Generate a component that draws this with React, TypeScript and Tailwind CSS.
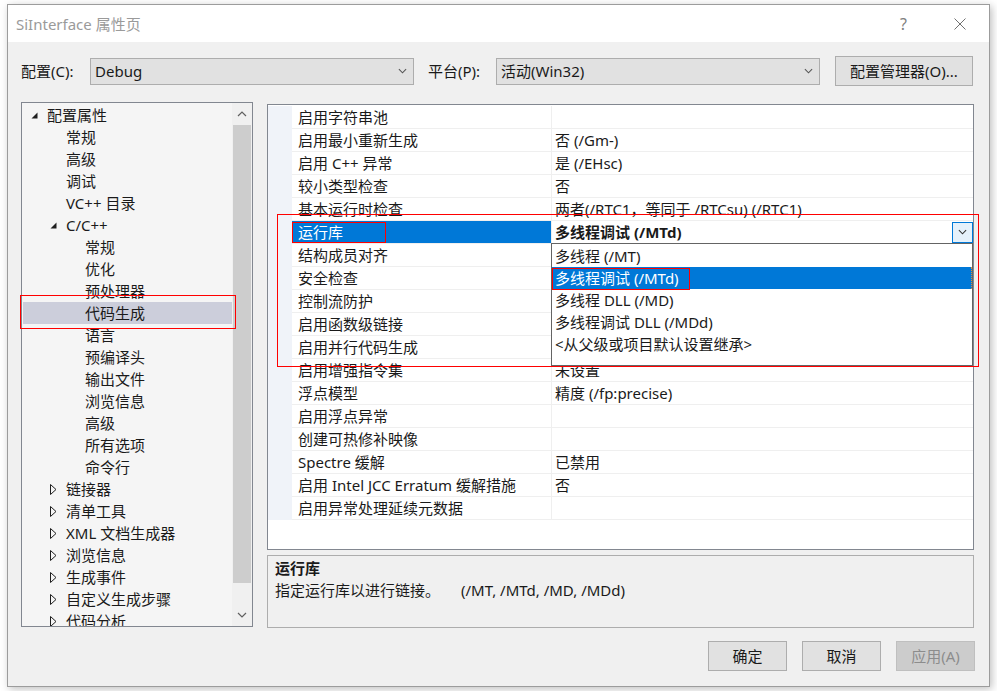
import React from "react";

type TreeRow = { label: string; pad: string; icon?: "open" | "closed"; selected?: boolean };

const tree: TreeRow[] = [
  { label: "配置属性", pad: "pl-[9px]", icon: "open" },
  { label: "常规", pad: "pl-[44px]" },
  { label: "高级", pad: "pl-[44px]" },
  { label: "调试", pad: "pl-[44px]" },
  { label: "VC++ 目录", pad: "pl-[44px]" },
  { label: "C/C++", pad: "pl-[28px]", icon: "open" },
  { label: "常规", pad: "pl-[63px]" },
  { label: "优化", pad: "pl-[63px]" },
  { label: "预处理器", pad: "pl-[63px]" },
  { label: "代码生成", pad: "pl-[62px]", selected: true },
  { label: "语言", pad: "pl-[63px]" },
  { label: "预编译头", pad: "pl-[63px]" },
  { label: "输出文件", pad: "pl-[63px]" },
  { label: "浏览信息", pad: "pl-[63px]" },
  { label: "高级", pad: "pl-[63px]" },
  { label: "所有选项", pad: "pl-[63px]" },
  { label: "命令行", pad: "pl-[63px]" },
  { label: "链接器", pad: "pl-[28px]", icon: "closed" },
  { label: "清单工具", pad: "pl-[28px]", icon: "closed" },
  { label: "XML 文档生成器", pad: "pl-[28px]", icon: "closed" },
  { label: "浏览信息", pad: "pl-[28px]", icon: "closed" },
  { label: "生成事件", pad: "pl-[28px]", icon: "closed" },
  { label: "自定义生成步骤", pad: "pl-[28px]", icon: "closed" },
  { label: "代码分析", pad: "pl-[28px]", icon: "closed" },
];

const props: [string, string][] = [
  ["启用字符串池", ""],
  ["启用最小重新生成", "否 (/Gm-)"],
  ["启用 C++ 异常", "是 (/EHsc)"],
  ["较小类型检查", "否"],
  ["基本运行时检查", "两者(/RTC1，等同于 /RTCsu) (/RTC1)"],
  ["运行库", "多线程调试 (/MTd)"],
  ["结构成员对齐", ""],
  ["安全检查", ""],
  ["控制流防护", ""],
  ["启用函数级链接", ""],
  ["启用并行代码生成", ""],
  ["启用增强指令集", "未设置"],
  ["浮点模型", "精度 (/fp:precise)"],
  ["启用浮点异常", ""],
  ["创建可热修补映像", ""],
  ["Spectre 缓解", "已禁用"],
  ["启用 Intel JCC Erratum 缓解措施", "否"],
  ["启用异常处理延续元数据", ""],
];

const options = ["多线程 (/MT)", "多线程调试 (/MTd)", "多线程 DLL (/MD)", "多线程调试 DLL (/MDd)", "<从父级或项目默认设置继承>"];

function Chevron({ up = false, color = "#444", w = 10 }: { up?: boolean; color?: string; w?: number }) {
  return (
    <svg width={w} height="6" viewBox="0 0 10 6">
      <path d={up ? "M1 5 L5 1 L9 5" : "M1 1 L5 5 L9 1"} fill="none" stroke={color} strokeWidth="1.2" />
    </svg>
  );
}

function Combo({ text, w }: { text: string; w: string }) {
  return (
    <div className={`${w} h-[27px] bg-[#e1e1e1] border border-[#adadad] flex items-center pl-[4px] pr-[6px]`}>
      <span className="flex-1">{text}</span>
      <Chevron color="#555" w={9} />
    </div>
  );
}

export default function App() {
  return (
    <div className="relative w-[997px] h-[691px] bg-white overflow-hidden pt-[4px] pl-[7px] text-[15px] leading-[22px] text-[#1a1a1a] font-['Noto_Sans','Noto_Sans_CJK_SC',sans-serif]">
      {/* dialog */}
      <div className="w-[983px] h-[683px] border border-[#9c9c9c] bg-[#f0f0f0] shadow-[2px_2px_8px_rgba(0,0,0,0.25)] flex flex-col">
        <div className="h-[37px] bg-white flex items-center pl-[8px]">
          <span className="text-[#9a9a9a]">SiInterface 属性页</span>
          <span className="ml-auto text-[#808080] text-[16px]">?</span>
          <svg className="ml-[47px] mr-[23px]" width="12" height="12" viewBox="0 0 12 12">
            <path d="M0.5 0.5 L11.5 11.5 M11.5 0.5 L0.5 11.5" stroke="#707070" strokeWidth="1" />
          </svg>
        </div>

        <div className="flex-1 flex flex-col pl-[13px]">
          {/* config row */}
          <div className="mt-[14px] h-[30px] flex items-center">
            <span className="w-[69px]">配置(C):</span>
            <Combo text="Debug" w="w-[324px]" />
            <span className="ml-[14px] w-[68px]">平台(P):</span>
            <Combo text="活动(Win32)" w="w-[324px]" />
            <button className="ml-[15px] w-[138px] h-[30px] bg-[#e1e1e1] border border-[#adadad]">配置管理器(O)...</button>
          </div>

          {/* main */}
          <div className="mt-[16px] h-[526px] flex items-start">
            {/* tree */}
            <div className="w-[232px] h-[525px] border border-[#828790] bg-[#f5f5f5] flex">
              <div className="flex-1 overflow-hidden pt-px">
                {tree.map((r, i) => (
                  <div key={i} className={`h-[22px] flex items-center whitespace-nowrap ${r.pad} ${r.selected ? "bg-[#cccedb] ml-px" : ""}`}>
                    {r.icon && (
                      <span className="w-[16px] flex items-center">
                        {r.icon === "open" ? (
                          <svg width="7" height="7" viewBox="0 0 7 7">
                            <polygon points="6.5,0.5 6.5,6.5 0.5,6.5" fill="#1e1e1e" />
                          </svg>
                        ) : (
                          <svg width="7" height="11" viewBox="0 0 7 11">
                            <polygon points="0.5,0.5 6,5.5 0.5,10.5" fill="none" stroke="#1e1e1e" strokeWidth="1" />
                          </svg>
                        )}
                      </span>
                    )}
                    <span>{r.label}</span>
                  </div>
                ))}
              </div>
              {/* scrollbar */}
              <div className="w-[20px] bg-[#f0f0f0] flex flex-col">
                <div className="h-[22px] flex items-center justify-center">
                  <Chevron up color="#606060" />
                </div>
                <div className="h-[458px] bg-[#cdcdcd] mx-px" />
                <div className="flex-1" />
                <div className="h-[22px] flex items-center justify-center">
                  <Chevron color="#606060" />
                </div>
              </div>
            </div>

            {/* right column */}
            <div className="ml-[14px] w-[707px] flex flex-col">
              <div className="relative mt-[2px] h-[446px] border border-[#828790] bg-white pt-px">
                {props.map(([name, value], i) => {
                  const sel = i === 5;
                  return (
                    <div key={i} className="flex h-[23px]">
                      <div className="w-[24px] bg-[#f0f3f9]" />
                      <div className={`w-[260px] pl-[6px] flex items-center whitespace-nowrap border-r border-b border-[#efefef] ${sel ? "bg-[#0078d7] text-white" : ""}`}>
                        {name}
                      </div>
                      <div className={`flex-1 pl-[3px] flex items-center whitespace-nowrap border-b border-[#efefef] ${sel ? "font-bold" : ""}`}>
                        <span className="flex-1">{value}</span>
                        {sel && (
                          <span className="w-[21px] h-[21px] border border-[#0078d7] bg-[#e5f1fb] flex items-center justify-center">
                            <Chevron color="#333" w={9} />
                          </span>
                        )}
                      </div>
                    </div>
                  );
                })}

                {/* open dropdown list */}
                <div className="absolute left-[283px] top-[138px] w-[422px] h-[123px] border border-[#646464] bg-white pt-px">
                  {options.map((o, i) => (
                    <div
                      key={o}
                      className={`h-[22px] flex items-center pl-[3px] whitespace-nowrap ${i === 1 ? "bg-[#0078d7] text-white border-r border-dotted border-[#e08a3a]" : ""}`}
                    >
                      {o}
                    </div>
                  ))}
                </div>
              </div>

              {/* description */}
              <div className="mt-[5px] h-[73px] border border-[#adadad] bg-[#f0f0f0] pl-[7px] pt-px">
                <div className="font-bold">运行库</div>
                <div className="flex">
                  <span>指定运行库以进行链接。</span>
                  <span className="ml-[21px]">(/MT, /MTd, /MD, /MDd)</span>
                </div>
              </div>
            </div>
          </div>

          {/* buttons */}
          <div className="mt-[13px] flex justify-end gap-[15px] pr-[14px]">
            <button className="w-[79px] h-[30px] bg-[#e1e1e1] border border-[#adadad]">确定</button>
            <button className="w-[79px] h-[30px] bg-[#e1e1e1] border border-[#adadad]">取消</button>
            <button className="w-[79px] h-[30px] bg-[#cccccc] border border-[#bfbfbf] text-[#8c8c8c]">应用(A)</button>
          </div>
        </div>
      </div>

      {/* red annotation boxes */}
      <div className="absolute left-[20px] top-[295px] w-[216px] h-[34px] border border-[#ff0000]" />
      <div className="absolute left-[292px] top-[222px] w-[94px] h-[21px] border border-[#ff0000]" />
      <div className="absolute left-[277px] top-[214px] w-[702px] h-[153px] border border-[#ff0000]" />
      <div className="absolute left-[552px] top-[268px] w-[138px] h-[22px] border border-[#ff0000]" />
    </div>
  );
}
